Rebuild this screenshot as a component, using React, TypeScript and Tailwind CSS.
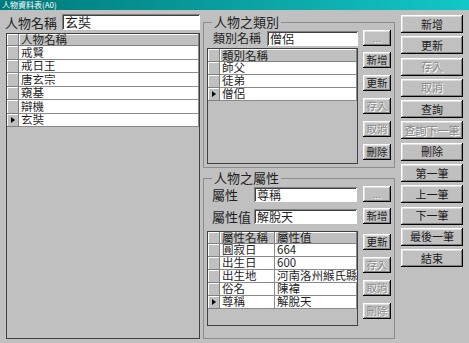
import React from "react";

const raised =
  "bg-[#c0c0c0] shadow-[inset_-1px_-1px_0_#000,inset_1px_1px_0_#fff,inset_-2px_-2px_0_#808080,inset_2px_2px_0_#dfdfdf]";
const sunken =
  "bg-white shadow-[inset_1px_1px_0_#808080,inset_-1px_-1px_0_#fff,inset_2px_2px_0_#404040]";
const cellRaised =
  "bg-[#c0c0c0] border-r border-b border-r-[#808080] border-b-[#808080] shadow-[inset_1px_1px_0_#fff]";

function Btn({
  label,
  className = "",
  disabled = false,
}: {
  label: string;
  className?: string;
  disabled?: boolean;
}) {
  return (
    <div
      className={`${raised} ${className} shrink-0 flex items-center justify-center leading-none whitespace-nowrap ${
        disabled ? "text-[#8a8a8a] [text-shadow:1px_1px_0_#fff]" : "text-[#1a1a1a]"
      }`}
    >
      {label}
    </div>
  );
}

function Tri() {
  return <div className="w-0 h-0 border-y-[3px] border-y-transparent border-l-[4px] border-l-black" />;
}

function Grid({
  className,
  headers,
  colClasses,
  rows,
  selected,
  headH,
  rowH,
}: {
  className: string;
  headers: string[];
  colClasses: string[];
  rows: string[][];
  selected: number;
  headH: string;
  rowH: string;
}) {
  return (
    <div className={`${className} shrink-0 border border-[#404040] bg-[#c0c0c0] overflow-hidden flex flex-col`}>
      <div className={`flex ${headH} shrink-0`}>
        <div className={`w-[12px] shrink-0 ${cellRaised}`} />
        {headers.map((h, i) => (
          <div
            key={i}
            className={`${colClasses[i]} ${cellRaised} pl-[2px] text-[11.5px] leading-[11px] flex items-center whitespace-nowrap text-[#222]`}
          >
            {h}
          </div>
        ))}
      </div>
      {rows.map((r, ri) => (
        <div key={ri} className={`flex ${rowH} shrink-0`}>
          <div className={`w-[12px] shrink-0 ${cellRaised} flex items-center justify-center`}>
            {ri === selected && <Tri />}
          </div>
          {r.map((c, ci) => (
            <div
              key={ci}
              className={`${colClasses[ci]} bg-white border-r border-b border-[#8a8a8a] pl-[2px] text-[11.5px] leading-none flex items-center whitespace-nowrap text-[#1f1f1f]`}
            >
              {c}
            </div>
          ))}
        </div>
      ))}
    </div>
  );
}

export default function App() {
  return (
    <div className="w-[469px] h-[343px] bg-[#c0c0c0] overflow-hidden font-['Noto_Sans_CJK_TC',sans-serif] text-[#1f1f1f]">
      <div className="h-[10px] bg-gradient-to-r from-[#007a7a] via-[#0aa0a0] to-[#12c8c8] text-white text-[8px] leading-[10px] pl-[2px] whitespace-nowrap">
        人物資料表(A0)
      </div>
      <div className="flex">
        {/* left column */}
        <div className="w-[202px] shrink-0 pl-[5px] pt-[4px]">
          <div className="flex h-[16px] items-center">
            <div className="w-[57px] shrink-0 text-[13px] leading-none whitespace-nowrap">人物名稱</div>
            <div className={`${sunken} w-[138px] h-[16px] text-[13px] leading-[16px] pl-[3px]`}>玄奘</div>
          </div>
          <Grid
            className="mt-[3px] ml-[1px] w-[194px] h-[306px]"
            headers={["人物名稱"]}
            colClasses={["flex-1"]}
            rows={[["戒賢"], ["戒日王"], ["唐玄宗"], ["窺基"], ["辯機"], ["玄奘"]]}
            selected={5}
            headH="h-[12px]"
            rowH="h-[13.5px]"
          />
        </div>

        {/* middle column */}
        <div className="w-[194px] shrink-0 pl-[1px]">
          <fieldset className="mt-[5px] w-[192px] border border-[#8c8c8c] pl-[3px] pb-[3px]">
            <legend className="ml-[5px] px-[2px] text-[13px] leading-[14px] whitespace-nowrap">人物之類別</legend>
            <div className="mt-[1px] flex h-[16px] items-center">
              <div className="w-[60px] shrink-0 pl-[6px] text-[12px] leading-none whitespace-nowrap">類別名稱</div>
              <div className={`${sunken} w-[91px] h-[15px] shrink-0 text-[12px] leading-[15px] pl-[3px]`}>僧侶</div>
              <Btn label="..." className="ml-[5px] w-[28px] h-[16px] text-[10px]" disabled />
            </div>
            <div className="mt-[2px] flex">
              <Grid
                className="w-[151px] h-[116px]"
                headers={["類別名稱"]}
                colClasses={["flex-1"]}
                rows={[["師父"], ["徒弟"], ["僧侶"]]}
                selected={2}
                headH="h-[13px]"
                rowH="h-[13px]"
              />
              <div className="ml-[5px] pt-[4px] flex flex-col gap-[7px]">
                <Btn label="新增" className="w-[28px] h-[16px] text-[10.5px]" />
                <Btn label="更新" className="w-[28px] h-[16px] text-[10.5px]" />
                <Btn label="存入" className="w-[28px] h-[16px] text-[10.5px]" disabled />
                <Btn label="取消" className="w-[28px] h-[16px] text-[10.5px]" disabled />
                <Btn label="刪除" className="w-[28px] h-[16px] text-[10.5px]" />
              </div>
            </div>
          </fieldset>

          <fieldset className="mt-[3px] w-[192px] border border-[#8c8c8c] pl-[3px] pb-[12px]">
            <legend className="ml-[5px] px-[2px] text-[13px] leading-[14px] whitespace-nowrap">人物之屬性</legend>
            <div className="mt-[1px] flex h-[16px] items-center">
              <div className="w-[47px] shrink-0 pl-[5px] text-[13px] leading-none whitespace-nowrap">屬性</div>
              <div className={`${sunken} w-[103px] h-[15px] shrink-0 text-[12px] leading-[15px] pl-[3px]`}>尊稱</div>
              <Btn label="..." className="ml-[6px] w-[28px] h-[16px] text-[10px]" disabled />
            </div>
            <div className="mt-[6px] flex h-[16px] items-center">
              <div className="w-[47px] shrink-0 pl-[5px] text-[13px] leading-none whitespace-nowrap">屬性值</div>
              <div className={`${sunken} w-[103px] h-[15px] shrink-0 text-[12px] leading-[15px] pl-[3px]`}>解脫天</div>
              <Btn label="新增" className="ml-[6px] w-[28px] h-[16px] text-[10.5px]" />
            </div>
            <div className="mt-[7px] flex">
              <Grid
                className="w-[151px] h-[95px]"
                headers={["屬性名稱", "屬性值"]}
                colClasses={["w-[55px] shrink-0", "flex-1"]}
                rows={[
                  ["圓寂日", "664"],
                  ["出生日", "600"],
                  ["出生地", "河南洛州緱氏縣"],
                  ["俗名", "陳褘"],
                  ["尊稱", "解脫天"],
                ]}
                selected={4}
                headH="h-[12px]"
                rowH="h-[13px]"
              />
              <div className="ml-[5px] pt-[3px] flex flex-col gap-[7px]">
                <Btn label="更新" className="w-[28px] h-[16px] text-[10.5px]" />
                <Btn label="存入" className="w-[28px] h-[16px] text-[10.5px]" disabled />
                <Btn label="取消" className="w-[28px] h-[16px] text-[10.5px]" disabled />
                <Btn label="刪除" className="w-[28px] h-[16px] text-[10.5px]" disabled />
              </div>
            </div>
          </fieldset>
        </div>

        {/* right column */}
        <div className="pl-[5px] pt-[5px] flex flex-col gap-[3.3px]">
          <Btn label="新增" className="w-[62px] h-[18px] text-[11px]" />
          <Btn label="更新" className="w-[62px] h-[18px] text-[11px]" />
          <Btn label="存入" className="w-[62px] h-[18px] text-[11px]" disabled />
          <Btn label="取消" className="w-[62px] h-[18px] text-[11px]" disabled />
          <Btn label="查詢" className="w-[62px] h-[18px] text-[11px]" />
          <Btn label="查詢下一筆" className="w-[62px] h-[18px] text-[11px]" disabled />
          <Btn label="刪除" className="w-[62px] h-[18px] text-[11px]" />
          <Btn label="第一筆" className="w-[62px] h-[18px] text-[11px]" />
          <Btn label="上一筆" className="w-[62px] h-[18px] text-[11px]" />
          <Btn label="下一筆" className="w-[62px] h-[18px] text-[11px]" />
          <Btn label="最後一筆" className="w-[62px] h-[18px] text-[11px]" />
          <Btn label="結束" className="w-[62px] h-[18px] text-[11px]" />
        </div>
      </div>
    </div>
  );
}
